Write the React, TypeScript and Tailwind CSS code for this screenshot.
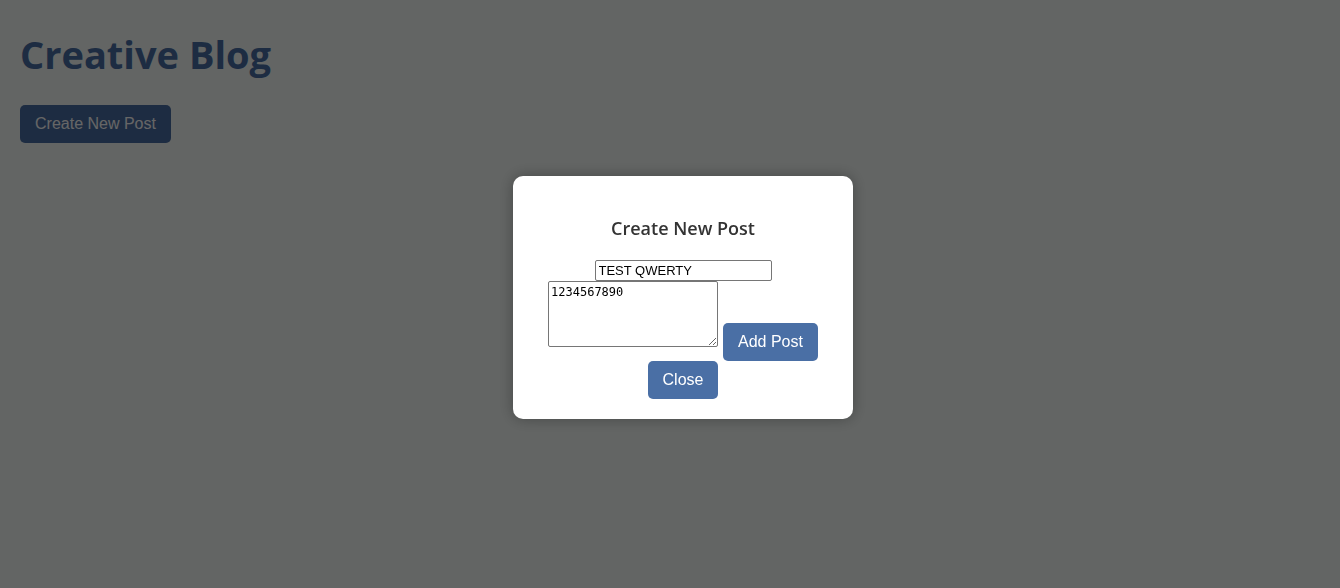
import { useState } from "react";

const actionButton =
  "cursor-pointer rounded-[5px] bg-[#4a6fa5] px-[15px] py-[10px] font-['Liberation_Sans',Arial,sans-serif] text-base leading-[18px] text-white hover:bg-[#3b5b8a]";

export default function App() {
  const [open, setOpen] = useState(true);
  const [title, setTitle] = useState("TEST QWERTY");
  const [content, setContent] = useState("1234567890");

  return (
    <div className="min-h-screen bg-[#f7fcf9] p-5 font-['Open_Sans','Noto_Sans',sans-serif] text-[#333]">
      <header className="flex flex-col items-start gap-5">
        <h1 className="pt-1 text-[38px] leading-[61px] font-bold text-[#4a6fa5]">Creative Blog</h1>
        <button type="button" className={actionButton} onClick={() => setOpen(true)}>
          Create New Post
        </button>
      </header>

      {open && (
        <div className="fixed inset-0 flex items-center justify-center bg-black/60 pt-[6px] pl-[26px]">
          <div
            role="dialog"
            aria-modal="true"
            aria-labelledby="dialog-title"
            className="w-[340px] rounded-[10px] bg-white p-5 shadow-[0_0_15px_rgba(0,0,0,0.3)]"
          >
            <h2 id="dialog-title" className="pt-5 pb-5 text-center text-lg leading-6 font-semibold">
              Create New Post
            </h2>
            <form className="flex flex-col items-center" onSubmit={(e) => e.preventDefault()}>
              <input
                type="text"
                aria-label="Post title"
                value={title}
                onChange={(e) => setTitle(e.target.value)}
                className="h-[21px] w-[177px] rounded-[2px] border border-[#767676] bg-white px-[3px] font-['Liberation_Sans',Arial,sans-serif] text-[13px] leading-4 text-black"
              />
              <div className="flex items-end gap-[5px]">
                <textarea
                  aria-label="Post content"
                  value={content}
                  onChange={(e) => setContent(e.target.value)}
                  className="mb-[14px] h-[66px] w-[170px] resize rounded-[2px] border border-[#767676] bg-white p-[2px] font-['DejaVu_Sans_Mono',monospace] text-xs leading-4 text-black"
                />
                <button type="submit" className={actionButton}>
                  Add Post
                </button>
              </div>
              <button type="button" className={actionButton} onClick={() => setOpen(false)}>
                Close
              </button>
            </form>
          </div>
        </div>
      )}
    </div>
  );
}
